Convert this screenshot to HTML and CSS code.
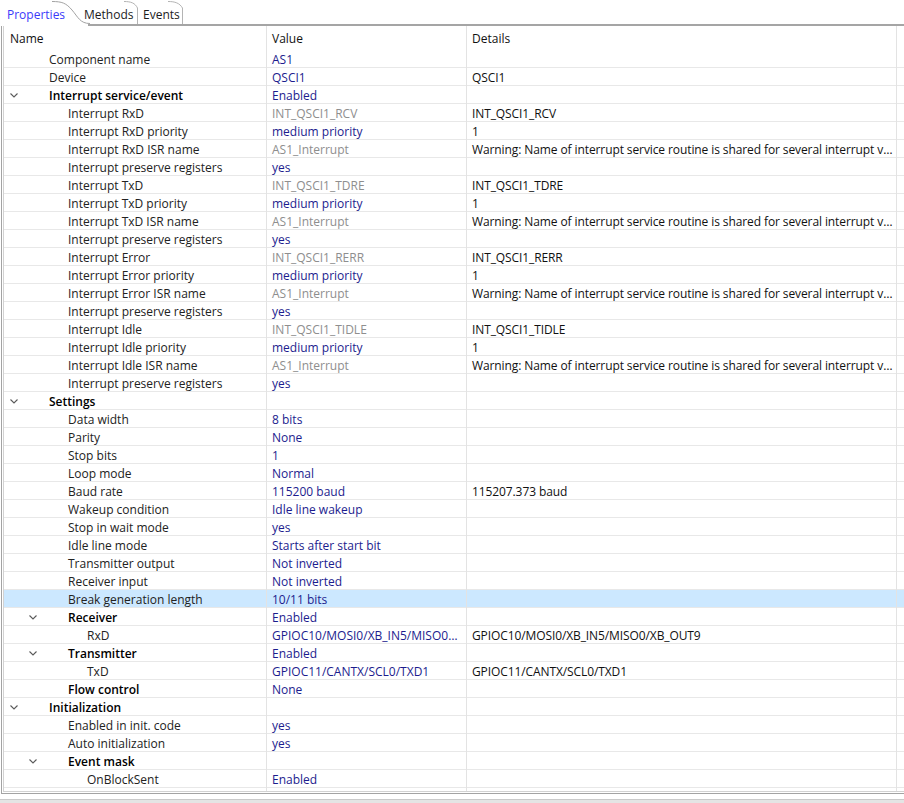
FILE: index.html
```html
<!DOCTYPE html>
<html>
<head>
<meta charset="utf-8">
<link rel="stylesheet" href="styles.css">
</head>
<body>
<div class="tabs">
  <svg class="deco" width="904" height="26" viewBox="0 0 904 26">
    <path d="M52 1.5 C62 1.5 66 3 72 10 S80 23.5 90 23.5" fill="none" stroke="#a3a3a3" stroke-width="1"/>
    <path d="M124 1.5 C131 1.5 135 3 137.5 8 L137.5 24" fill="none" stroke="#b4b4b4" stroke-width="1"/>
    <path d="M168 1.5 C175 1.5 179.5 3 182.5 8 L182.5 24" fill="none" stroke="#b4b4b4" stroke-width="1"/>
    <rect x="88" y="24" width="816" height="2" fill="#a5a5a5"/>
  </svg>
  <div class="tab tab1 active">Properties</div>
  <div class="tab tab2">Methods</div>
  <div class="tab tab3">Events</div>
</div>
<div class="panel">
  <div class="inner">
    <div class="hdr">
      <div class="c first">Name</div>
      <div class="c">Value</div>
      <div class="c">Details</div>
      <div class="c last"></div>
    </div>
    <div class="rows">
      <div class="row"><div class="c name l1"><span class="tw"></span><span>Component name</span></div><div class="c v">AS1</div><div class="c d"></div><div class="c last"></div></div>
      <div class="row"><div class="c name l1"><span class="tw"></span><span>Device</span></div><div class="c v">QSCI1</div><div class="c d">QSCI1</div><div class="c last"></div></div>
      <div class="row"><div class="c name l1 grp"><span class="tw"><svg width="8" height="5" viewBox="0 0 8 5"><path d="M0.5 0.5 L4 4 L7.5 0.5" fill="none" stroke="#5a5a5a" stroke-width="1.1"/></svg></span><span>Interrupt service/event</span></div><div class="c v">Enabled</div><div class="c d"></div><div class="c last"></div></div>
      <div class="row"><div class="c name l2"><span class="tw"></span><span>Interrupt RxD</span></div><div class="c g">INT_QSCI1_RCV</div><div class="c d">INT_QSCI1_RCV</div><div class="c last"></div></div>
      <div class="row"><div class="c name l2"><span class="tw"></span><span>Interrupt RxD priority</span></div><div class="c v">medium priority</div><div class="c d">1</div><div class="c last"></div></div>
      <div class="row"><div class="c name l2"><span class="tw"></span><span>Interrupt RxD ISR name</span></div><div class="c g">AS1_Interrupt</div><div class="c d">Warning: Name of interrupt service routine is shared for several interrupt vectors</div><div class="c last"></div></div>
      <div class="row"><div class="c name l2"><span class="tw"></span><span>Interrupt preserve registers</span></div><div class="c v">yes</div><div class="c d"></div><div class="c last"></div></div>
      <div class="row"><div class="c name l2"><span class="tw"></span><span>Interrupt TxD</span></div><div class="c g">INT_QSCI1_TDRE</div><div class="c d">INT_QSCI1_TDRE</div><div class="c last"></div></div>
      <div class="row"><div class="c name l2"><span class="tw"></span><span>Interrupt TxD priority</span></div><div class="c v">medium priority</div><div class="c d">1</div><div class="c last"></div></div>
      <div class="row"><div class="c name l2"><span class="tw"></span><span>Interrupt TxD ISR name</span></div><div class="c g">AS1_Interrupt</div><div class="c d">Warning: Name of interrupt service routine is shared for several interrupt vectors</div><div class="c last"></div></div>
      <div class="row"><div class="c name l2"><span class="tw"></span><span>Interrupt preserve registers</span></div><div class="c v">yes</div><div class="c d"></div><div class="c last"></div></div>
      <div class="row"><div class="c name l2"><span class="tw"></span><span>Interrupt Error</span></div><div class="c g">INT_QSCI1_RERR</div><div class="c d">INT_QSCI1_RERR</div><div class="c last"></div></div>
      <div class="row"><div class="c name l2"><span class="tw"></span><span>Interrupt Error priority</span></div><div class="c v">medium priority</div><div class="c d">1</div><div class="c last"></div></div>
      <div class="row"><div class="c name l2"><span class="tw"></span><span>Interrupt Error ISR name</span></div><div class="c g">AS1_Interrupt</div><div class="c d">Warning: Name of interrupt service routine is shared for several interrupt vectors</div><div class="c last"></div></div>
      <div class="row"><div class="c name l2"><span class="tw"></span><span>Interrupt preserve registers</span></div><div class="c v">yes</div><div class="c d"></div><div class="c last"></div></div>
      <div class="row"><div class="c name l2"><span class="tw"></span><span>Interrupt Idle</span></div><div class="c g">INT_QSCI1_TIDLE</div><div class="c d">INT_QSCI1_TIDLE</div><div class="c last"></div></div>
      <div class="row"><div class="c name l2"><span class="tw"></span><span>Interrupt Idle priority</span></div><div class="c v">medium priority</div><div class="c d">1</div><div class="c last"></div></div>
      <div class="row"><div class="c name l2"><span class="tw"></span><span>Interrupt Idle ISR name</span></div><div class="c g">AS1_Interrupt</div><div class="c d">Warning: Name of interrupt service routine is shared for several interrupt vectors</div><div class="c last"></div></div>
      <div class="row"><div class="c name l2"><span class="tw"></span><span>Interrupt preserve registers</span></div><div class="c v">yes</div><div class="c d"></div><div class="c last"></div></div>
      <div class="row"><div class="c name l1 grp"><span class="tw"><svg width="8" height="5" viewBox="0 0 8 5"><path d="M0.5 0.5 L4 4 L7.5 0.5" fill="none" stroke="#5a5a5a" stroke-width="1.1"/></svg></span><span>Settings</span></div><div class="c v"></div><div class="c d"></div><div class="c last"></div></div>
      <div class="row"><div class="c name l2"><span class="tw"></span><span>Data width</span></div><div class="c v">8 bits</div><div class="c d"></div><div class="c last"></div></div>
      <div class="row"><div class="c name l2"><span class="tw"></span><span>Parity</span></div><div class="c v">None</div><div class="c d"></div><div class="c last"></div></div>
      <div class="row"><div class="c name l2"><span class="tw"></span><span>Stop bits</span></div><div class="c v">1</div><div class="c d"></div><div class="c last"></div></div>
      <div class="row"><div class="c name l2"><span class="tw"></span><span>Loop mode</span></div><div class="c v">Normal</div><div class="c d"></div><div class="c last"></div></div>
      <div class="row"><div class="c name l2"><span class="tw"></span><span>Baud rate</span></div><div class="c v">115200 baud</div><div class="c d">115207.373 baud</div><div class="c last"></div></div>
      <div class="row"><div class="c name l2"><span class="tw"></span><span>Wakeup condition</span></div><div class="c v">Idle line wakeup</div><div class="c d"></div><div class="c last"></div></div>
      <div class="row"><div class="c name l2"><span class="tw"></span><span>Stop in wait mode</span></div><div class="c v">yes</div><div class="c d"></div><div class="c last"></div></div>
      <div class="row"><div class="c name l2"><span class="tw"></span><span>Idle line mode</span></div><div class="c v">Starts after start bit</div><div class="c d"></div><div class="c last"></div></div>
      <div class="row"><div class="c name l2"><span class="tw"></span><span>Transmitter output</span></div><div class="c v">Not inverted</div><div class="c d"></div><div class="c last"></div></div>
      <div class="row"><div class="c name l2"><span class="tw"></span><span>Receiver input</span></div><div class="c v">Not inverted</div><div class="c d"></div><div class="c last"></div></div>
      <div class="row sel"><div class="c name l2"><span class="tw"></span><span>Break generation length</span></div><div class="c v">10/11 bits</div><div class="c d"></div><div class="c last"></div></div>
      <div class="row"><div class="c name l2 grp"><span class="tw"><svg width="8" height="5" viewBox="0 0 8 5"><path d="M0.5 0.5 L4 4 L7.5 0.5" fill="none" stroke="#5a5a5a" stroke-width="1.1"/></svg></span><span>Receiver</span></div><div class="c v">Enabled</div><div class="c d"></div><div class="c last"></div></div>
      <div class="row"><div class="c name l3"><span class="tw"></span><span>RxD</span></div><div class="c v">GPIOC10/MOSI0/XB_IN5/MISO0/XB_OUT9</div><div class="c d">GPIOC10/MOSI0/XB_IN5/MISO0/XB_OUT9</div><div class="c last"></div></div>
      <div class="row"><div class="c name l2 grp"><span class="tw"><svg width="8" height="5" viewBox="0 0 8 5"><path d="M0.5 0.5 L4 4 L7.5 0.5" fill="none" stroke="#5a5a5a" stroke-width="1.1"/></svg></span><span>Transmitter</span></div><div class="c v">Enabled</div><div class="c d"></div><div class="c last"></div></div>
      <div class="row"><div class="c name l3"><span class="tw"></span><span>TxD</span></div><div class="c v">GPIOC11/CANTX/SCL0/TXD1</div><div class="c d">GPIOC11/CANTX/SCL0/TXD1</div><div class="c last"></div></div>
      <div class="row"><div class="c name l2 grp"><span class="tw"></span><span>Flow control</span></div><div class="c v">None</div><div class="c d"></div><div class="c last"></div></div>
      <div class="row"><div class="c name l1 grp"><span class="tw"><svg width="8" height="5" viewBox="0 0 8 5"><path d="M0.5 0.5 L4 4 L7.5 0.5" fill="none" stroke="#5a5a5a" stroke-width="1.1"/></svg></span><span>Initialization</span></div><div class="c v"></div><div class="c d"></div><div class="c last"></div></div>
      <div class="row"><div class="c name l2"><span class="tw"></span><span>Enabled in init. code</span></div><div class="c v">yes</div><div class="c d"></div><div class="c last"></div></div>
      <div class="row"><div class="c name l2"><span class="tw"></span><span>Auto initialization</span></div><div class="c v">yes</div><div class="c d"></div><div class="c last"></div></div>
      <div class="row"><div class="c name l2 grp"><span class="tw"><svg width="8" height="5" viewBox="0 0 8 5"><path d="M0.5 0.5 L4 4 L7.5 0.5" fill="none" stroke="#5a5a5a" stroke-width="1.1"/></svg></span><span>Event mask</span></div><div class="c v"></div><div class="c d"></div><div class="c last"></div></div>
      <div class="row"><div class="c name l3"><span class="tw"></span><span>OnBlockSent</span></div><div class="c v">Enabled</div><div class="c d"></div><div class="c last"></div></div>
      <div class="row"><div class="c name l3"><span class="tw"></span><span></span></div><div class="c v"></div><div class="c d"></div><div class="c last"></div></div>
    </div>
  </div>
</div>
<div class="foot"></div>
</body>
</html>
```
FILE: styles.css
```css
html, body {
  margin: 0;
  padding: 0;
  background: #ffffff;
}
body {
  font-family: "Open Sans", "Noto Sans", sans-serif;
  font-size: 12px;
  color: #1c1c1c;
  height: 803px;
  overflow: hidden;
}
.tabs {
  position: relative;
  height: 26px;
  display: flex;
}
.tabs .deco {
  position: absolute;
  left: 0;
  top: 0;
}
.tab {
  position: relative;
  height: 24px;
  box-sizing: border-box;
  padding-top: 4px;
  display: flex;
  align-items: center;
  color: #1c1c1c;
  white-space: nowrap;
}
.tab1 { width: 84px; padding-left: 7px; color: #3a3afa; }
.tab2 { width: 59px; }
.tab3 { width: 44px; }
.panel {
  margin-left: 1px;
  border-left: 1px solid #a3a3a3;
  border-bottom: 1px solid #a3a3a3;
}
.inner {
  margin-left: 1px;
  margin-bottom: 1px;
  border-left: 1px solid #d2d2d2;
  border-bottom: 1px solid #d2d2d2;
}
.hdr, .row {
  display: grid;
  grid-template-columns: 263px 200px 430px 1fr;
}
.hdr {
  height: 24px;
  line-height: 23px;
  color: #111;
}
.hdr .c { padding-top: 1px; }
.c {
  box-sizing: border-box;
  border-right: 1px solid #e3e3e3;
  overflow: hidden;
  white-space: nowrap;
  text-overflow: ellipsis;
  padding: 0 3px 0 5px;
}
.hdr .first { padding-left: 6px; }
.c.last { border-right: none; }
.rows {
  height: 741px;
  overflow: hidden;
}
.row {
  height: 18px;
  line-height: 17px;
  box-shadow: inset 0 -1px 0 #e8e8e8;
}
.row .c { padding-top: 1px; }
.row.sel { background: #cce8ff; }
.name {
  display: flex;
  align-items: center;
  padding-left: 0;
  color: #222;
}
.row .name { padding-top: 0; }
.name > span:last-child { padding-top: 1px; }
.tw {
  flex: none;
  width: 9px;
  height: 18px;
  margin-right: 31px;
  display: flex;
  align-items: center;
  justify-content: center;
}
.tw svg { display: block; margin-top: 1px; }
.l1 .tw { margin-left: 5px; }
.l2 .tw { margin-left: 24px; }
.l3 .tw { margin-left: 43px; }
.grp { color: #000; font-weight: 600; }
.v { color: #1c1c8e; padding-right: 6px; }
.g { color: #8e8e8e; }
.d { color: #111; padding-right: 2px; letter-spacing: -0.1px; }
.foot {
  margin-top: 5px;
  height: 5px;
  background: #e4e4e4;
  border-top: 1px solid #cacaca;
}
```
